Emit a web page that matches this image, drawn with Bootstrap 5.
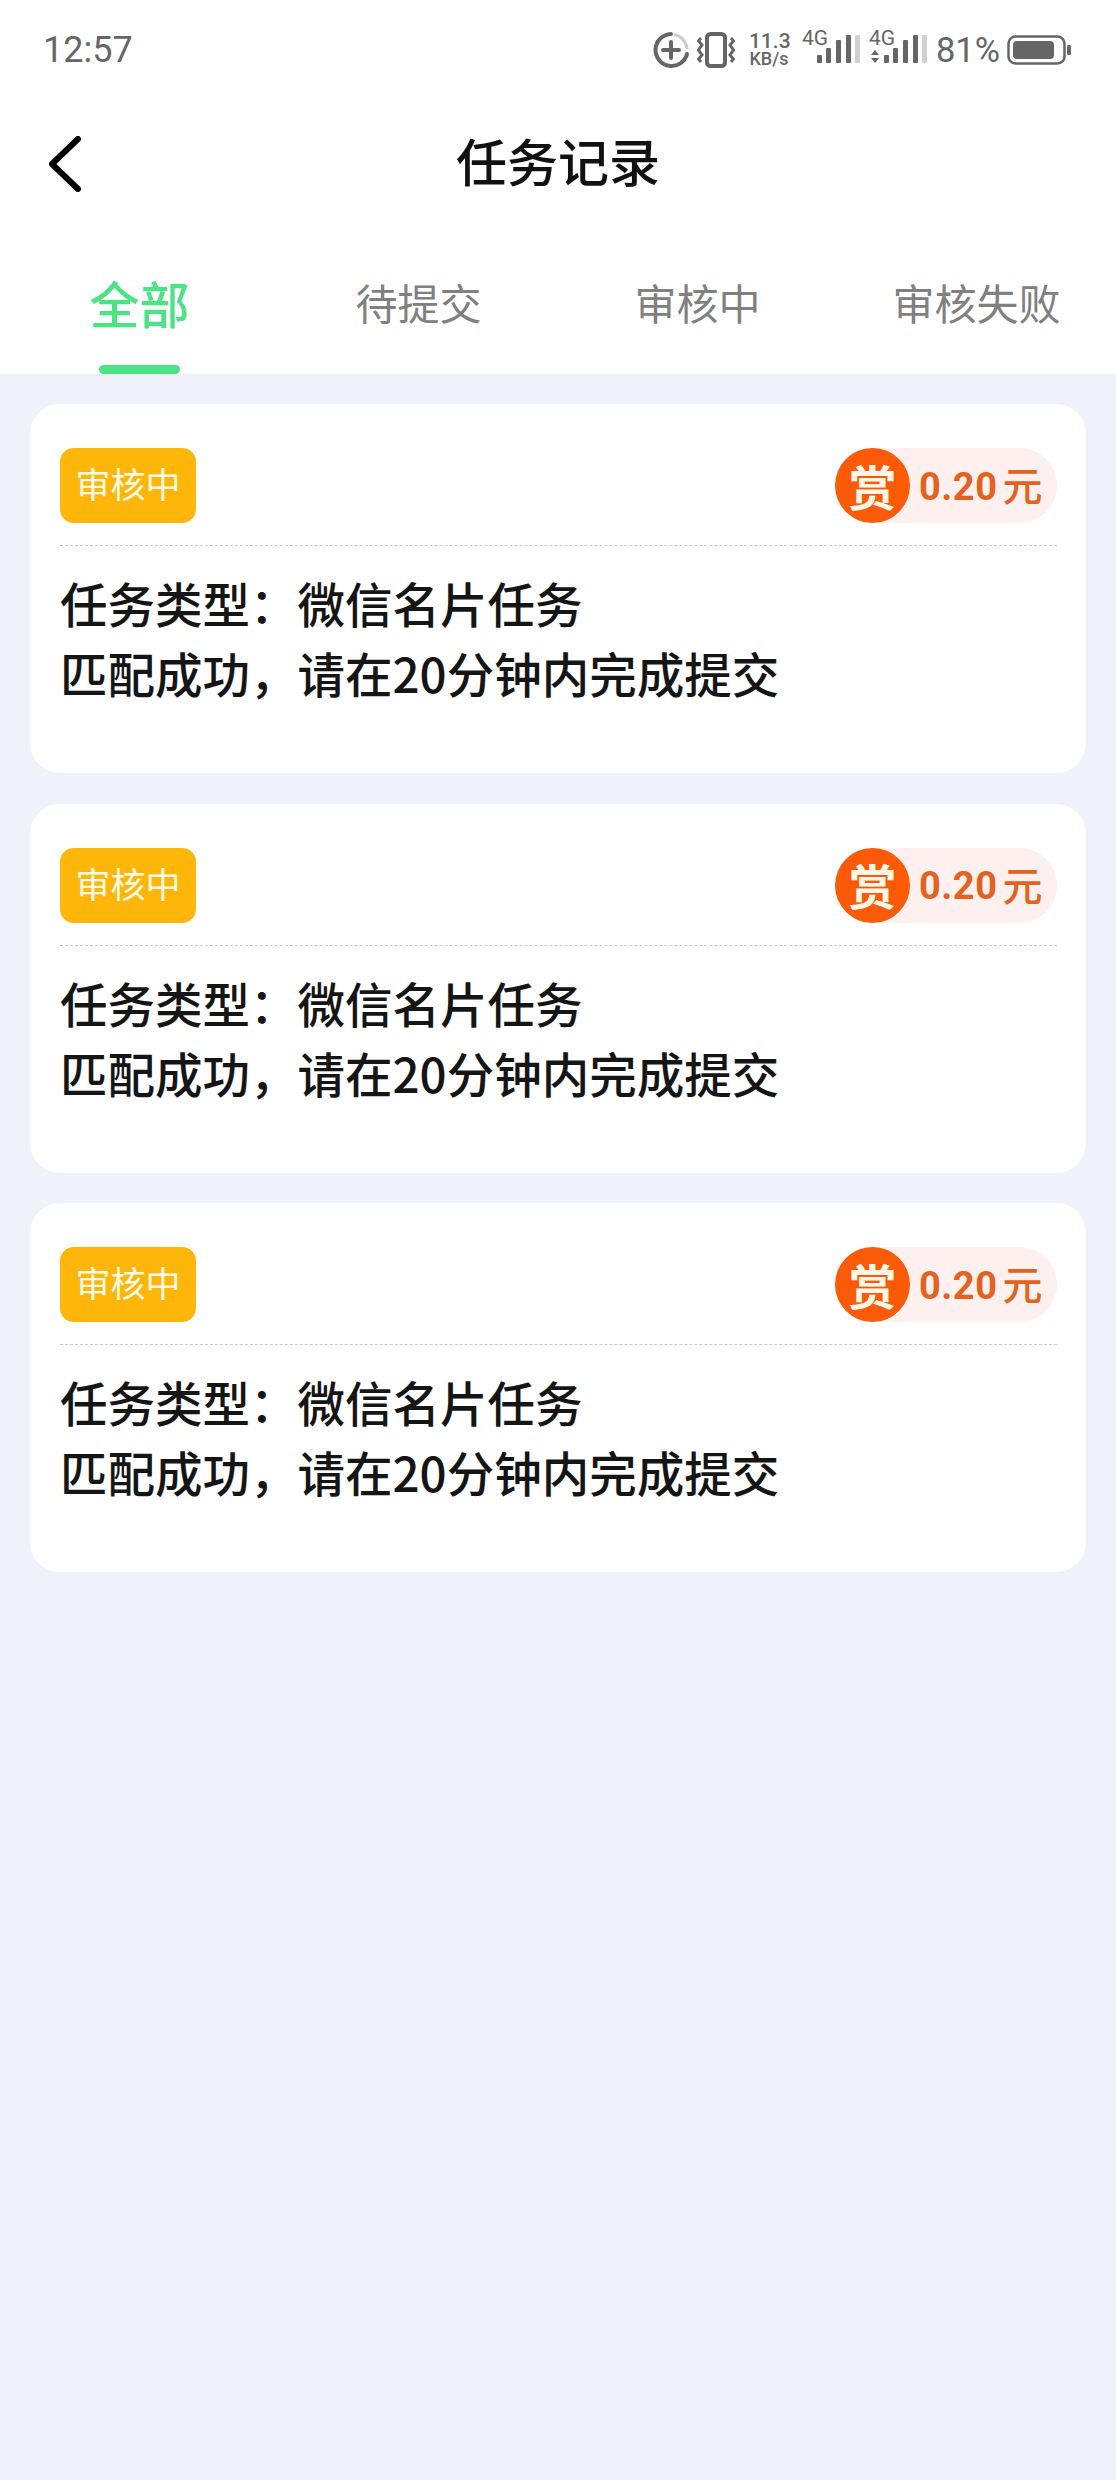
<!DOCTYPE html>
<html lang="zh-CN">
  <head>
    <meta charset="UTF-8" />
    <meta name="viewport" content="width=device-width, initial-scale=1.0" />
    <title>任务记录</title>
    <link href="https://cdn.jsdelivr.net/npm/bootstrap@5.3.3/dist/css/bootstrap.min.css" rel="stylesheet" />
    <style>
      body {
        background-color: #eff2fa;
        font-family: "Noto Sans CJK SC", "Noto Sans", sans-serif;
        min-height: 2480px;
      }
      .top-area {
        background-color: #fff;
      }
      .status-row {
        height: 100px;
        padding: 0 45px 0 43px;
        color: #666;
      }
      .clock-time {
        font-family: Roboto, sans-serif;
        font-size: 36px;
      }
      .status-icons {
        gap: 7px;
      }
      .speed-text {
        font-family: Roboto, sans-serif;
        font-size: 18px;
        line-height: 18px;
        text-align: center;
        font-weight: 500;
        width: 40px;
        margin: 0 6px 0 7px;
      }
      .speed-text b {
        font-size: 21px;
        font-weight: 500;
        display: block;
      }
      .percent-text {
        font-family: Roboto, sans-serif;
        font-size: 34.5px;
        line-height: 1;
      }
      .title-row {
        height: 126px;
        padding-bottom: 6px;
      }
      .back-btn {
        left: 46px;
        top: 36px;
      }
      .page-title {
        font-size: 51px;
        font-weight: 500;
        color: #111;
        line-height: 1;
      }
      .tab-row {
        height: 148px;
      }
      .tab-item {
        width: 279px;
        font-size: 42px;
        color: #808080;
        padding-top: 48px;
        line-height: 56px;
        text-align: center;
      }
      .tab-item.is-active {
        font-size: 50px;
        font-weight: 500;
        color: #4be383;
      }
      .tab-line {
        left: 99px;
        bottom: 0;
        width: 81px;
        height: 9px;
        background-color: #4be383;
        border-radius: 5px;
      }
      .record-list {
        padding: 30px 30px 0;
        gap: 30.5px;
      }
      .record-card {
        height: 369px;
        border: 0;
        border-radius: 30px;
        padding: 44px 29px 0 30px;
      }
      .record-head {
        height: 98px;
        border-bottom: 1px dashed #c9c9c9;
        align-items: flex-start;
      }
      .status-tag {
        width: 136px;
        height: 75px;
        background-color: #ffb60a;
        color: #fffbe6;
        font-size: 35px;
        border-radius: 14px;
        padding-bottom: 4px;
      }
      .reward-pill {
        height: 75px;
        width: 222px;
        background-color: #fdf0ee;
        border-radius: 38px;
        color: #e2621f;
        font-size: 38px;
        font-weight: 700;
      }
      .reward-coin {
        width: 75px;
        height: 75px;
        background-color: #fb5a08;
        color: #fff6e6;
        font-size: 48px;
        font-weight: 700;
        line-height: 1;
        padding-bottom: 2px;
      }
      .reward-num {
        font-family: Roboto, sans-serif;
        margin-left: 9px;
        letter-spacing: 0.5px;
        padding-top: 3px;
      }
      .reward-unit {
        font-size: 40px;
        font-weight: 500;
        margin-left: 5px;
        padding-bottom: 3px;
      }
      .record-body {
        margin-top: 22px;
        font-size: 47.5px;
        font-weight: 500;
        line-height: 70px;
        color: #151515;
      }
    </style>
  </head>
  <body>
    <div class="top-area">
      <div class="status-row d-flex justify-content-between align-items-center">
        <span class="clock-time">12:57</span>
        <div class="status-icons d-flex align-items-center">
          <svg width="38" height="38" viewBox="0 0 38 38" fill="none">
            <path d="M19 3A16 16 0 1 0 35 23" stroke="#666" stroke-width="4" stroke-linecap="round" />
            <path d="M22 3.500A16 16 0 0 1 35 18" stroke="#ccc" stroke-width="3" />
            <path d="M19 11V27M11 19H27" stroke="#666" stroke-width="4" stroke-linecap="round" />
          </svg>
          <svg width="38" height="36" viewBox="0 0 38 36" fill="none">
            <rect x="10" y="2" width="18" height="32" rx="3.500" stroke="#666" stroke-width="4" />
            <path d="M4 6L1.500 9L5 13L1.500 18L5 23L1.500 27L4 30M34 6L36.500 9L33 13L36.500 18L33 23L36.500 27L34 30" stroke="#666" stroke-width="3" />
          </svg>
          <div class="speed-text"><b>11.3</b>KB/s</div>
          <svg width="60" height="60" viewBox="0 0 60 60">
            <text x="0" y="25" font-family="Roboto, sans-serif" font-size="21" fill="#666">4G</text>
            <rect x="15" y="35" width="5" height="8" rx="1" fill="#666" />
            <rect x="24" y="28" width="5" height="15" rx="1" fill="#666" />
            <rect x="34" y="20" width="5" height="23" rx="1" fill="#666" />
            <rect x="44" y="15" width="5" height="28" rx="1" fill="#666" />
            <rect x="53" y="15" width="5" height="28" rx="1" fill="#d0d0d0" />
          </svg>
          <svg width="60" height="60" viewBox="0 0 60 60">
            <text x="0" y="25" font-family="Roboto, sans-serif" font-size="21" fill="#666">4G</text>
            <path d="M2 35L6 30L10 35ZM2 38L6 43L10 38Z" fill="#666" />
            <rect x="15" y="35" width="5" height="8" rx="1" fill="#666" />
            <rect x="24" y="28" width="5" height="15" rx="1" fill="#666" />
            <rect x="34" y="20" width="5" height="23" rx="1" fill="#666" />
            <rect x="44" y="15" width="5" height="28" rx="1" fill="#666" />
            <rect x="53" y="15" width="5" height="28" rx="1" fill="#d0d0d0" />
          </svg>
          <span class="percent-text">81%</span>
          <svg width="64" height="30" viewBox="0 0 64 30" fill="none">
            <rect x="1.500" y="1.500" width="56" height="27" rx="7" stroke="#666" stroke-width="2.500" />
            <rect x="6" y="6" width="41" height="18" rx="4" fill="#666" />
            <rect x="60" y="10" width="4" height="10" rx="1.500" fill="#666" />
          </svg>
        </div>
      </div>

      <div class="title-row position-relative d-flex justify-content-center align-items-center">
        <!-- back arrow -->
        <svg class="back-btn position-absolute" width="36" height="56" viewBox="0 0 36 56" fill="none">
          <path d="M32 3L6 28L32 53" stroke="#000" stroke-width="6" stroke-linecap="round" stroke-linejoin="round" />
        </svg>
        <span class="page-title">任务记录</span>
      </div>

      <div class="tab-row d-flex">
        <div class="tab-item is-active position-relative">全部<div class="tab-line position-absolute"></div></div>
        <div class="tab-item">待提交</div>
        <div class="tab-item">审核中</div>
        <div class="tab-item">审核失败</div>
      </div>
    </div>

    <div class="record-list d-flex flex-column" id="recordList"></div>

    <script>
      // three identical records
      const list = document.getElementById("recordList");
      for (let i = 0; i < 3; i++) {
        list.innerHTML += `
          <div class="card record-card">
            <div class="record-head d-flex justify-content-between">
              <div class="status-tag d-flex justify-content-center align-items-center">审核中</div>
              <div class="reward-pill d-flex align-items-center">
                <div class="reward-coin rounded-circle d-flex justify-content-center align-items-center">赏</div>
                <span class="reward-num">0.20</span><span class="reward-unit">元</span>
              </div>
            </div>
            <div class="record-body">任务类型：微信名片任务<br />匹配成功，请在20分钟内完成提交</div>
          </div>`;
      }
    </script>
    <script src="https://cdn.jsdelivr.net/npm/bootstrap@5.3.3/dist/js/bootstrap.bundle.min.js"></script>
  </body>
</html>
